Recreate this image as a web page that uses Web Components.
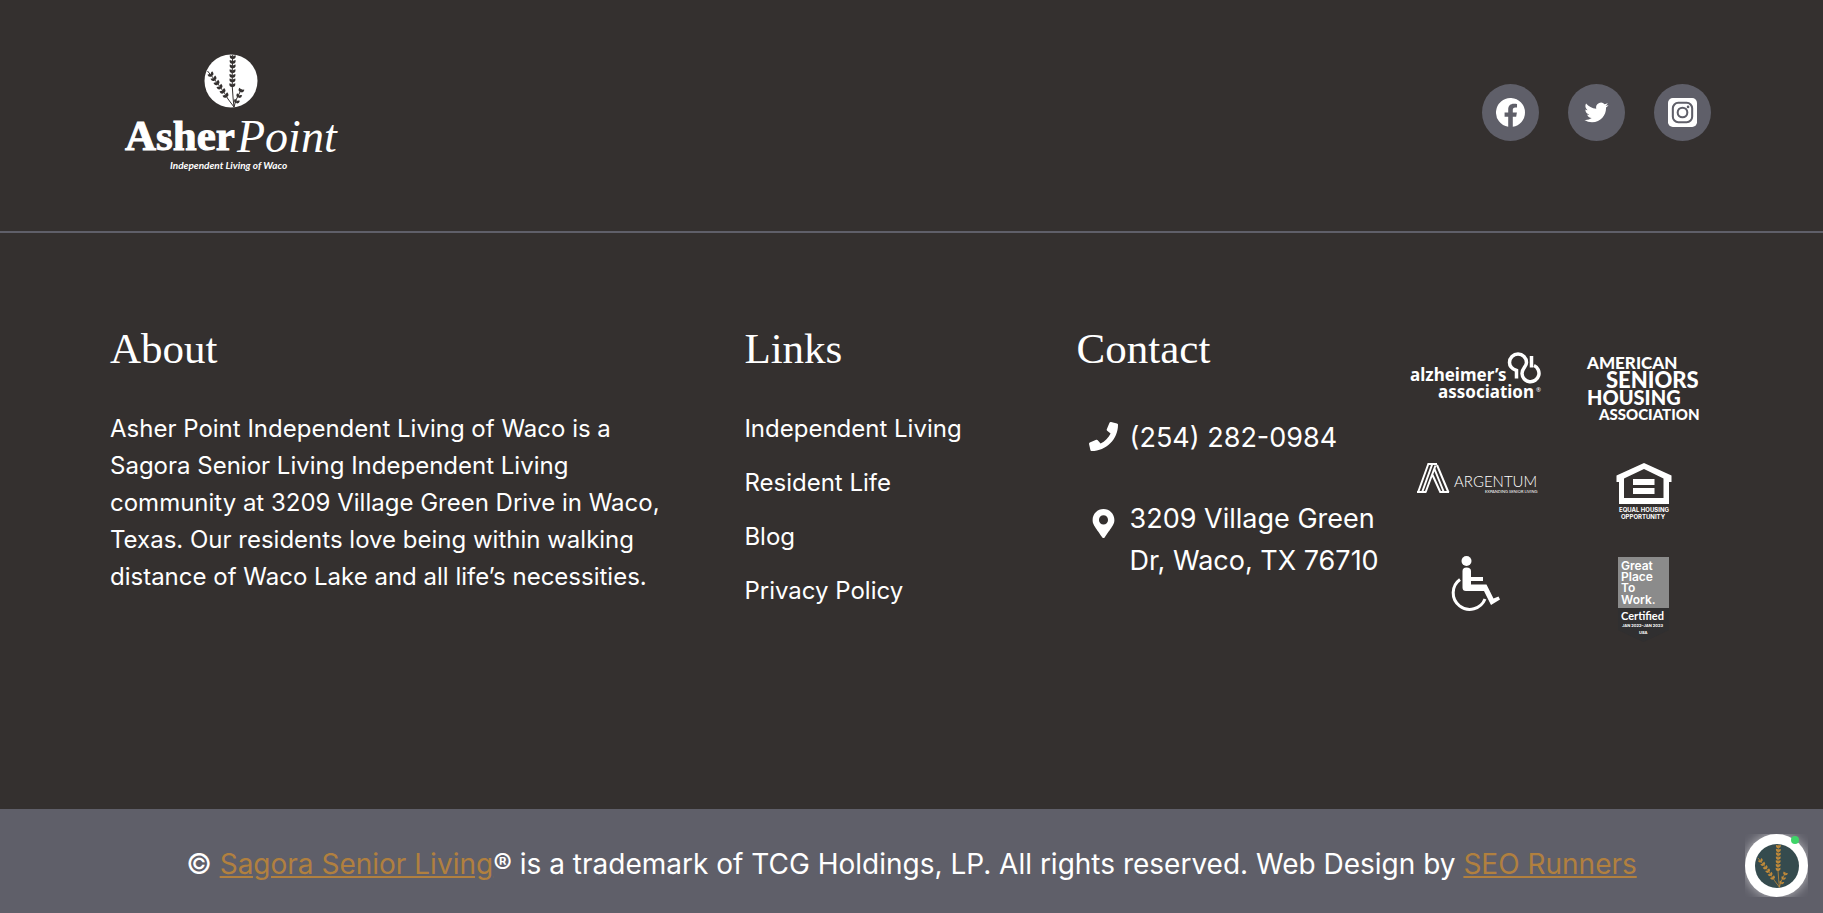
<!DOCTYPE html>
<html lang="en">
<head>
<meta charset="utf-8">
<meta name="viewport" content="width=device-width, initial-scale=1">
<title>Asher Point Independent Living of Waco</title>
<style>
  :root {
    --bg: #34302f;
    --bar: #5f5f69;
    --gold: #b1803f;
    --text: #fff;
  }
  body {
    margin: 0;
    background: var(--bg);
    color: var(--text);
    font-family: Inter, "Open Sans", sans-serif;
    font-size: 24px;
    line-height: 37px;
  }
  .about {
    max-width: 570px;
    margin: 0;
  }
</style>
</head>
<body>
<site-footer>
  <brand-logo slot="brand"></brand-logo>
  <social-link slot="social" network="facebook" href="#facebook"></social-link>
  <social-link slot="social" network="twitter" href="#twitter"></social-link>
  <social-link slot="social" network="instagram" href="#instagram"></social-link>

  <footer-column heading="About">
    <p class="about">Asher Point Independent Living of Waco is a Sagora Senior Living Independent Living community at 3209 Village Green Drive in Waco, Texas. Our residents love being within walking distance of Waco Lake and all life’s necessities.</p>
  </footer-column>
  <footer-column heading="Links"><footer-links></footer-links></footer-column>
  <footer-column heading="Contact">
    <contact-item icon="phone" href="tel:2542820984">(254) 282-0984</contact-item>
    <contact-item icon="pin" href="#map">3209 Village Green Dr, Waco, TX 76710</contact-item>
  </footer-column>
  <partner-logos></partner-logos>

  <copyright-bar slot="legal"></copyright-bar>
</site-footer>
<chat-bubble></chat-bubble>

<script>
// one stalk of wheat: a stem and pairs of leaves along it
function stalk(x1, y1, x2, y2, pairs, size) {
  const angle = Math.atan2(y1 - y2, x1 - x2) * 180 / Math.PI;
  let out = "";
  for (let i = 0; i < pairs; i++) {
    const t = i / (pairs - 1 || 1);
    const x = x1 + (x2 - x1) * t;
    const y = y1 + (y2 - y1) * t;
    for (const side of [-38, 38]) {
      out += `<path transform="translate(${x.toFixed(1)} ${y.toFixed(1)}) rotate(${(angle + side).toFixed(1)}) scale(${size})" d="M0 0Q2-3 5 0Q2 3 0 0z"/>`;
    }
  }
  return out;
}

const wheat = `
  <g fill="none" stroke="currentColor" stroke-width="1">
    <path d="M28.7 1Q28 18 28.3 33Q29 45 30 53M3.500 17Q18 34 24 45L30 53M37.500 35Q34 42 32 46L30 53"/>
  </g>
  <g fill="currentColor">
    ${stalk(28.7, 5, 28.3, 33, 7, 0.95)}
    ${stalk(8, 22, 23, 43, 6, 0.95)}
    ${stalk(36.5, 38, 32, 49, 3, 0.9)}
  </g>`;

function define(name, html, setup) {
  const template = document.createElement("template");
  template.innerHTML = html;
  customElements.define(name, class extends HTMLElement {
    constructor() {
      super();
      this.attachShadow({ mode: "open" });
      this.shadowRoot.appendChild(template.content.cloneNode(true));
    }
    connectedCallback() {
      if (setup) setup(this, this.shadowRoot);
    }
  });
}

define("site-footer", `
  <style>
    :host { display: flex; flex-direction: column; min-height: 100vh; }
    footer { flex: 1; display: flex; flex-direction: column; }
    .top {
      display: flex;
      justify-content: space-between;
      align-items: center;
      padding: 54px 112px 60px 125px;
      border-bottom: 2px solid var(--bar);
    }
    .social { display: flex; gap: 29px; }
    .columns {
      flex: 1;
      display: grid;
      grid-template-columns: 2fr 1fr 1fr 1fr;
      gap: 30px;
      padding: 89px 112px 100px 110px;
      align-items: start;
    }
    @media (max-width: 1200px) {
      .top { padding: 40px; }
      .columns { grid-template-columns: 1fr 1fr; padding: 60px 40px; }
    }
    @media (max-width: 640px) {
      .columns { grid-template-columns: 1fr; }
    }
  </style>
  <footer>
    <div class="top">
      <slot name="brand"></slot>
      <div class="social"><slot name="social"></slot></div>
    </div>
    <div class="columns"><slot></slot></div>
    <slot name="legal"></slot>
  </footer>
`);

define("brand-logo", `
  <style>
    :host { display: block; }
    a { display: block; color: #fff; }
    svg { display: block; overflow: visible; }
    .mark { color: var(--bg); }
    .serif { font: 700 43px "Liberation Serif", serif; stroke: #fff; stroke-width: 1; }
    .script { font: italic 46px "Liberation Serif", serif; }
    .tag { font: italic 700 10px Lato, sans-serif; }
  </style>
  <a href="#home" aria-label="Asher Point home">
    <svg width="215" height="117" viewBox="0 0 215 117" fill="#fff">
      <g class="mark" transform="translate(79 0)">
        <circle cx="27" cy="27" r="26.500" fill="#fff"/>
        ${wheat}
      </g>
      <text class="serif" x="0" y="96">Asher</text>
      <text class="script" x="112" y="98">Point</text>
      <text class="tag" x="45" y="115">Independent Living of Waco</text>
    </svg>
  </a>
`);

const networks = {
  facebook: `<path fill="#fff" d="M24 12a12 12 0 1 0-13.900 11.850V15.500H7.100V12h3V9.400c0-3 1.800-4.700 4.600-4.700 1.300 0 2.700.2 2.700.2v3h-1.500c-1.500 0-2 .9-2 1.900V12h3.400l-.6 3.500h-2.800v8.350A12 12 0 0 0 24 12z"/>`,
  twitter: `<g transform="translate(2 2) scale(.83)"><path fill="#fff" d="M23.950 4.570a10 10 0 0 1-2.820.77 4.960 4.960 0 0 0 2.160-2.720c-.95.55-2 .95-3.130 1.190a4.920 4.920 0 0 0-8.380 4.480C7.690 8.090 4.070 6.130 1.640 3.160a4.820 4.820 0 0 0-.67 2.480c0 1.710.87 3.210 2.190 4.100a4.900 4.900 0 0 1-2.230-.62v.06a4.920 4.920 0 0 0 3.950 4.830 5 5 0 0 1-2.210.08 4.940 4.940 0 0 0 4.600 3.420A9.870 9.870 0 0 1 0 19.540a13.990 13.990 0 0 0 7.550 2.210c9.050 0 14-7.500 14-13.980 0-.21 0-.42-.02-.63a9.940 9.940 0 0 0 2.460-2.550z"/></g>`,
  instagram: `<rect width="24" height="24" rx="4" fill="#fff"/><g fill="none" stroke="var(--bar)" stroke-width="1.700"><rect x="4" y="4" width="16" height="16" rx="4.500"/><circle cx="12" cy="12" r="4"/></g><circle cx="16.600" cy="7.400" r="1.100" fill="var(--bar)"/>`
};

define("social-link", `
  <style>
    :host { display: block; }
    a {
      display: flex;
      align-items: center;
      justify-content: center;
      width: 57px;
      height: 57px;
      border-radius: 50%;
      background: var(--bar);
    }
    svg { width: 29px; height: 29px; }
  </style>
  <a><svg viewBox="0 0 24 24"></svg></a>
`, (el, root) => {
  const link = root.querySelector("a");
  link.href = el.getAttribute("href");
  link.setAttribute("aria-label", el.getAttribute("network"));
  root.querySelector("svg").innerHTML = networks[el.getAttribute("network")];
});

define("footer-column", `
  <style>
    :host { display: block; min-width: 0; }
    h2 {
      margin: 0 0 34px;
      font: 400 43px/54px "Liberation Serif", serif;
    }
  </style>
  <h2></h2>
  <slot></slot>
`, (el, root) => {
  root.querySelector("h2").textContent = el.getAttribute("heading");
});

define("footer-links", `
  <style>
    :host { display: block; }
    ul {
      display: flex;
      flex-direction: column;
      gap: 17px;
      margin: 0;
      padding: 0;
      list-style: none;
    }
    a { color: inherit; text-decoration: none; }
    a:hover { text-decoration: underline; }
  </style>
  <nav aria-label="Links">
    <ul>
      <li><a href="#independent-living">Independent Living</a></li>
      <li><a href="#resident-life">Resident Life</a></li>
      <li><a href="#blog">Blog</a></li>
      <li><a href="#privacy">Privacy Policy</a></li>
    </ul>
  </nav>
`);

const contactIcons = {
  phone: `<path fill="#fff" d="M493.400 24.600l-104-24c-11.300-2.600-22.900 3.300-27.500 13.900l-48 112c-4.200 9.800-1.400 21.300 6.900 28l60.600 49.600c-36 76.700-98.900 140.500-177.200 177.200l-49.600-60.600c-6.800-8.300-18.200-11.100-28-6.900l-112 48C3.900 366.500-2 378.100.6 389.400l24 104C27.100 504.200 36.700 512 48 512c256.100 0 464-207.500 464-464 0-11.200-7.700-20.900-18.600-23.400z"/>`,
  pin: `<path fill="#fff" transform="translate(64 0)" d="M172.300 501.700C27 291 0 269.400 0 192 0 86 86 0 192 0s192 86 192 192c0 77.400-27 99-172.300 309.700-9.500 13.800-29.900 13.800-39.400 0zM192 272c44.200 0 80-35.800 80-80s-35.800-80-80-80-80 35.800-80 80 35.800 80 80 80z"/>`
};

define("contact-item", `
  <style>
    :host { display: block; padding: 7px 0 0 12px; margin-bottom: 32px; }
    a {
      display: grid;
      grid-template-columns: 29px 1fr;
      gap: 12px;
      color: inherit;
      text-decoration: none;
      font-size: 27px;
      line-height: 42px;
    }
    svg { width: 29px; height: 29px; margin-top: 5px; }
    :host([icon="pin"]) svg { margin-top: 11px; }
  </style>
  <a><svg viewBox="0 0 512 512" aria-hidden="true"></svg><span><slot></slot></span></a>
`, (el, root) => {
  root.querySelector("a").href = el.getAttribute("href");
  root.querySelector("svg").innerHTML = contactIcons[el.getAttribute("icon")];
});

define("partner-logos", `
  <style>
    :host { display: block; padding-top: 31px; }
    ul {
      display: grid;
      grid-template-columns: 1fr 1fr;
      grid-template-rows: 110px 93px auto;
      column-gap: 33px;
      justify-items: center;
      align-items: start;
      margin: 0;
      padding: 0;
      list-style: none;
    }
    li { line-height: 0; }
    svg { display: block; overflow: visible; }
    .alz { font: 700 17px "Noto Sans", sans-serif; }
    .reg { font: 400 6px "Noto Sans", sans-serif; }
    .senior { font: 900 17px Lato, sans-serif; }
    .big { font-size: 22px; }
    .mid { font-size: 20px; }
    .small { font-size: 15px; }
    .arg { font: 300 15px Lato, sans-serif; }
    .fine { font: 400 4px Lato, sans-serif; }
    .eho { font: 700 6px Inter, sans-serif; }
    .work { font: 600 12px Inter, sans-serif; }
    .cert { font: 700 11px Lato, sans-serif; }
    .date { font: 700 4px Inter, sans-serif; }
  </style>
  <ul>
    <li>
      <svg width="132" height="50" viewBox="0 0 132 50" fill="#fff" role="img" aria-label="alzheimer's association">
        <text class="alz"><tspan x="0" y="28">alzheimer’s</tspan><tspan x="28" y="45">association</tspan></text>
        <text class="reg" x="126" y="39">®</text>
        <g fill="none" stroke="#fff" stroke-width="3.500">
          <path d="M106.500 25.500V17.500Q99.500 15 99.500 9.500A8.500 8.500 0 0 1 116.500 9.500C116.500 14 112 15 112 20.500A8.500 8.500 0 1 0 124 12.500"/>
          <path d="M121.500 3V14.500"/>
        </g>
      </svg>
    </li>
    <li>
      <svg width="116" height="70" viewBox="0 0 116 70" fill="#fff" role="img" aria-label="American Seniors Housing Association">
        <text class="senior">
          <tspan x="1" y="16">AMERICAN</tspan>
          <tspan class="big" x="20" y="35">SENIORS</tspan>
          <tspan class="mid" x="1" y="52">HOUSING</tspan>
          <tspan class="small" x="13" y="67">ASSOCIATION</tspan>
        </text>
      </svg>
    </li>
    <li>
      <svg width="119" height="31" viewBox="0 0 119 31" fill="#fff" role="img" aria-label="Argentum">
        <g fill="none" stroke="#fff" stroke-width="2">
          <path d="M1 29.500L11.500.5M5 29.500L15.500.5M8.500 29.500L18.500 2.500M10.500 1H20M20 2L31.500 29.500M17.500 6L27 29.500M15.500 12L23.500 29.500M0 29H9M22.500 29H32"/>
        </g>
        <text class="arg" x="37" y="24">ARGENTUM</text>
        <text class="fine" x="68" y="30">EXPANDING SENIOR LIVING</text>
      </svg>
    </li>
    <li>
      <svg width="56" height="58" viewBox="0 0 56 58" fill="#fff" role="img" aria-label="Equal Housing Opportunity">
        <path fill-rule="evenodd" d="M28 0L55.500 12.500V19H53V41H3V19H.5V12.500zM28 6L8 15.500V35H47.500V15.500zM17 16H38.500V22H17zM17 25H38.500V31H17z"/>
        <text class="eho"><tspan x="3" y="49">EQUAL HOUSING</tspan><tspan x="5" y="56">OPPORTUNITY</tspan></text>
      </svg>
    </li>
    <li>
      <svg width="50" height="57" viewBox="0 0 50 57" fill="#fff" role="img" aria-label="Wheelchair accessible">
        <circle cx="15.500" cy="5" r="5"/>
        <path d="M11.500 15Q11.500 11.500 15.500 11.500Q20 11.500 20 15V21H32V25H20V28.500H35.500L42.500 42.500L47.500 40.500L49 43.500L40 49L33 35H15Q11.500 35 11.500 31.500z"/>
        <path fill="none" stroke="#fff" stroke-width="3" d="M9 23.500A16.500 16.500 0 1 0 34 43"/>
      </svg>
    </li>
    <li>
      <svg width="51" height="87" viewBox="0 0 51 87" fill="#fff" role="img" aria-label="Great Place To Work Certified">
        <path fill="#302f30" d="M0 51H51V74L25.500 86L0 74z"/>
        <path fill="#8b8b8b" d="M0 1H51V52H0z"/>
        <text class="work">
          <tspan x="3" y="14">Great</tspan>
          <tspan x="3" y="25">Place</tspan>
          <tspan x="3" y="36">To</tspan>
          <tspan x="3" y="48">Work.</tspan>
        </text>
        <text class="cert" x="3" y="64">Certified</text>
        <text class="date" x="4" y="71">JAN 2022–JAN 2023</text>
        <text class="date" x="21" y="78">USA</text>
      </svg>
    </li>
  </ul>
`);

define("copyright-bar", `
  <style>
    :host {
      display: block;
      padding: 34px 24px 28px;
      background: var(--bar);
      font-size: 28px;
      line-height: 42px;
      text-align: center;
    }
    p { margin: 0; }
    a { color: var(--gold); }
  </style>
  <p>© <a href="#sagora">Sagora Senior Living</a>® is a trademark of TCG Holdings, LP. All rights reserved. Web Design by <a href="#seo-runners">SEO Runners</a></p>
`);

define("chat-bubble", `
  <style>
    :host { position: fixed; right: 15px; bottom: 16px; display: block; line-height: 0; }
    button {
      width: 63px;
      height: 63px;
      padding: 0;
      border: 0;
      overflow: hidden;
      background: none;
      cursor: pointer;
    }
    .face {
      display: flex;
      align-items: center;
      justify-content: center;
      width: 63px;
      height: 63px;
      border-radius: 50%;
      background: #fff;
      box-shadow: 0 0 12px rgba(255,255,255,0.6);
    }
    svg { width: 44px; height: 44px; color: #c08a3a; }
    .dot {
      position: absolute;
      top: 2px;
      right: 9px;
      width: 8px;
      height: 8px;
      border-radius: 50%;
      background: #3fd468;
    }
  </style>
  <button type="button" aria-label="Open chat">
    <span class="face"><svg viewBox="0 0 54 54"><circle cx="27" cy="27" r="27" fill="#354b4e"/>${wheat}</svg></span>
    <span class="dot"></span>
  </button>
`);
</script>
</body>
</html>
